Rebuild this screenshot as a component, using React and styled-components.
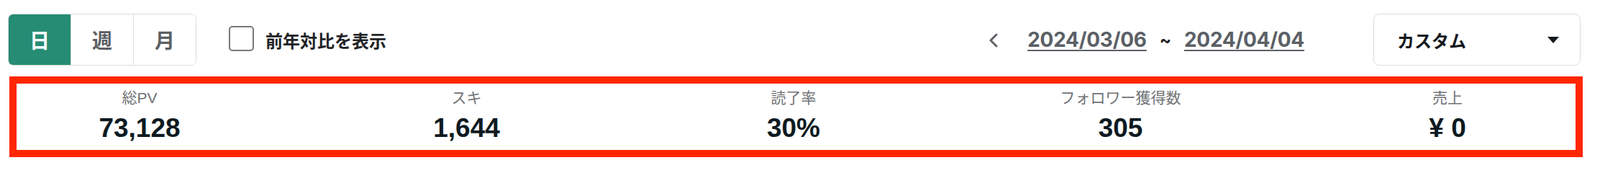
import React from 'react';
import styled, { createGlobalStyle } from 'styled-components';

const stats = [
  { label: '総PV', value: '73,128' },
  { label: 'スキ', value: '1,644' },
  { label: '読了率', value: '30%' },
  { label: 'フォロワー獲得数', value: '305' },
  { label: '売上', value: '¥ 0' },
];

const periods = ['日', '週', '月'];

const GlobalStyle = createGlobalStyle`
  body {
    margin: 0;
    background: #fff;
    font-family: "Liberation Sans", "Noto Sans CJK JP", sans-serif;
  }
`;

const App = () => {
  return (
    <Page>
      <GlobalStyle />
      <TopBar>
        <Segmented>
          {periods.map((p, i) => (
            <Segment key={p} $active={i === 0}>{p}</Segment>
          ))}
        </Segmented>
        <CheckLabel>
          <CheckBox />
          <span>前年対比を表示</span>
        </CheckLabel>
        <Spacer />
        <DateNav>
          <PrevButton aria-label="前へ">
            <svg width="14" height="20" viewBox="0 0 14 20">
              <path d="M11 2 L3 10 L11 18" fill="none" stroke="#5f6368" strokeWidth="3" strokeLinecap="round" strokeLinejoin="round" />
            </svg>
          </PrevButton>
          <DateLink href="#">2024/03/06</DateLink>
          <Tilde>~</Tilde>
          <DateLink href="#">2024/04/04</DateLink>
        </DateNav>
        <Dropdown>
          <span>カスタム</span>
          <Caret />
        </Dropdown>
      </TopBar>
      <StatsBox>
        <StatsGrid>
          {stats.map((s) => (
            <Stat key={s.label}>
              <StatLabel>{s.label}</StatLabel>
              <StatValue>{s.value}</StatValue>
            </Stat>
          ))}
        </StatsGrid>
      </StatsBox>
    </Page>
  );
};

const Page = styled.div`
  padding: 19px 27px 0 11px;
  height: 221px;
  box-sizing: border-box;
`;

const TopBar = styled.div`
  display: flex;
  align-items: center;
  height: 72px;
`;

const Segmented = styled.div`
  display: flex;
  border: 1px solid #dcdcdc;
  border-radius: 7px;
  overflow: hidden;
  height: 72px;
  box-sizing: border-box;
`;

const Segment = styled.button`
  width: 87px;
  height: 100%;
  border: none;
  border-left: 1px solid #dcdcdc;
  padding: 0;
  background: ${(p) => (p.$active ? '#268c73' : '#fff')};
  color: ${(p) => (p.$active ? '#fff' : '#5c5f63')};
  font-family: "Noto Sans CJK JP", sans-serif;
  font-weight: 700;
  font-size: 28px;
  cursor: pointer;

  &:first-child {
    border-left: none;
    width: 86px;
  }
`;

const CheckLabel = styled.label`
  display: flex;
  align-items: center;
  gap: 16px;
  margin-left: 45px;
  font-family: "Noto Sans CJK JP", sans-serif;
  font-weight: 700;
  font-size: 24px;
  color: #1f2326;
`;

const CheckBox = styled.span`
  width: 35px;
  height: 35px;
  box-sizing: border-box;
  border: 2px solid #77797c;
  border-radius: 5px;
  margin-top: -3px;
`;

const Spacer = styled.div`
  flex: 1;
`;

const DateNav = styled.div`
  display: flex;
  align-items: center;
`;

const PrevButton = styled.button`
  display: flex;
  border: none;
  background: none;
  padding: 0;
  margin-right: 40px;
  margin-top: 2px;
  cursor: pointer;
`;

const DateLink = styled.a`
  font-family: Inter, "Liberation Sans", sans-serif;
  font-weight: 700;
  font-size: 28px;
  letter-spacing: -0.3px;
  color: #5b6066;
  text-decoration: underline;
  text-decoration-thickness: 2px;
  text-underline-offset: 4px;
`;

const Tilde = styled.span`
  font-family: Inter, "Liberation Sans", sans-serif;
  font-weight: 700;
  font-size: 24px;
  color: #222;
  margin: 0 18px;
`;

const Dropdown = styled.div`
  display: flex;
  align-items: center;
  justify-content: space-between;
  width: 288px;
  height: 72px;
  box-sizing: border-box;
  margin-left: 96px;
  padding: 0 29px 0 32px;
  border: 1px solid #dcdcdc;
  border-radius: 8px;
  font-family: "Noto Sans CJK JP", sans-serif;
  font-weight: 700;
  font-size: 24px;
  color: #14191d;
`;

const Caret = styled.span`
  width: 0;
  height: 0;
  border-left: 8px solid transparent;
  border-right: 8px solid transparent;
  border-top: 9px solid #14191d;
`;

const StatsBox = styled.div`
  margin: 15px -3px 0 2px;
  height: 112px;
  box-sizing: border-box;
  border: 10px solid #ff2600;
`;

const StatsGrid = styled.div`
  display: grid;
  grid-template-columns: repeat(5, 342px);
  justify-content: space-between;
  padding: 5px 7px 0 0;
`;

const Stat = styled.div`
  text-align: center;
`;

const StatLabel = styled.div`
  font-size: 21px;
  line-height: 30px;
  color: #6f7174;
`;

const StatValue = styled.div`
  margin-top: 4px;
  font-weight: 700;
  font-size: 37px;
  line-height: 46px;
  color: #0e1a21;
`;

export default App;
